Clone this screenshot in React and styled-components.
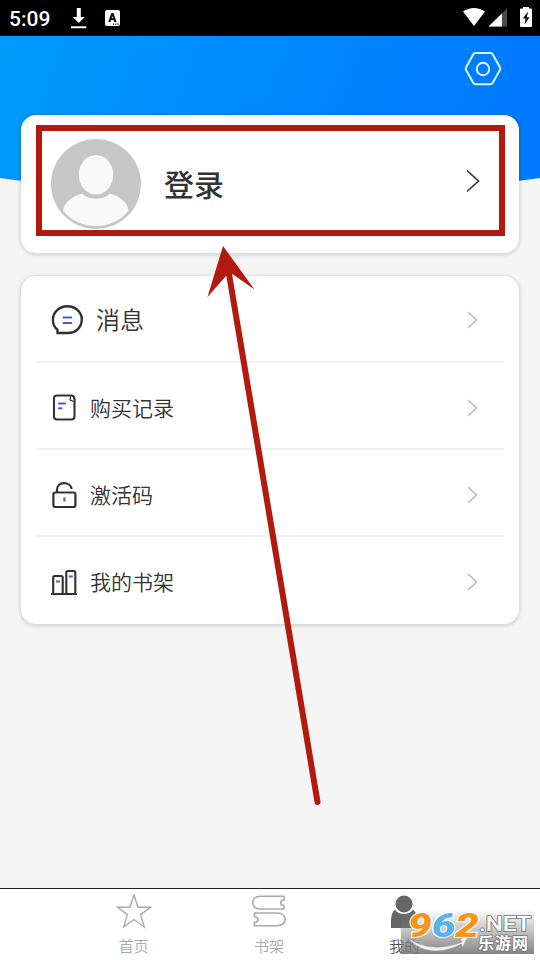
import styled, { createGlobalStyle } from "styled-components";

const GlobalStyle = createGlobalStyle`
  * {
    box-sizing: border-box;
  }
  body {
    margin: 0;
    background: #f5f5f5;
    font-family: Roboto, "Noto Sans CJK SC", sans-serif;
  }
  svg {
    display: block;
  }
`;

const RED = "#b11a0c";

const StatusIcons = () => (
  <svg width="72" height="36" viewBox="0 0 72 36">
    <path d="M1 11.500C7.500 6.800 16.500 6.800 23 11.500L12 26z" fill="#fff" />
    <path d="M26.500 26.500L45 8.500V26.500z" fill="#4a4a4a" />
    <path d="M26.500 26.500L40 13.400V26.500z" fill="#fff" />
    <path d="M59 8.500h2V7h6v1.500h2a1 1 0 0 1 1 1V26a1 1 0 0 1-1 1h-10a1 1 0 0 1-1-1V9.500a1 1 0 0 1 1-1z" fill="#fff" />
    <path d="M66 11.500l-5 7h2.600l-1 6 4.900-7.300h-2.600z" fill="#000" />
  </svg>
);

const DownloadIcon = () => (
  <svg width="16" height="22" viewBox="0 0 16 22" fill="#fff">
    <path d="M5.800 1h4v9h4L7.800 16 1.800 10h4zM0 19.300h15.300V21.300H0z" />
  </svg>
);

const BadgeIcon = () => (
  <svg width="15" height="16" viewBox="0 0 15 16">
    <rect width="15" height="16" rx="2" fill="#fff" />
    <text x="7.300" y="12" fontFamily="Roboto" fontSize="12" fontWeight="900" textAnchor="middle">
      A
    </text>
    <path d="M8 14.200h6" stroke="#000" strokeWidth="1.200" strokeDasharray="1.200 1" />
  </svg>
);

const SettingsIcon = () => (
  <svg width="38" height="36" viewBox="0 0 38 36" fill="none" stroke="#dcf8ff" strokeWidth="2">
    <path d="M11.500 2h15q1.500 0 2.300 1.400l7 12.600q.9 1.600 0 3.200l-7 12.500q-.8 1.500-2.300 1.500h-15q-1.500 0-2.300-1.500l-7-12.500q-.9-1.600 0-3.200l7-12.600Q10 2 11.500 2z" />
    <circle cx="19" cy="18" r="6.200" />
  </svg>
);

const AvatarIcon = () => (
  <svg width="90" height="90" viewBox="0 0 90 90">
    <circle cx="45" cy="45" r="45" fill="#c6c6c6" />
    <ellipse cx="45" cy="35.700" rx="17.200" ry="19.800" fill="#f9f9f9" />
    <path d="M12 71.500C13 63 21 57.500 31 54.500C39 61.500 51 61.500 59 54.500C69 57.500 76.500 63 77.500 71.500C70 81.500 58 87 45 87S19.500 81.500 12 71.500z" fill="#f9f9f9" />
  </svg>
);

const MessageIcon = () => (
  <svg width="32" height="32" viewBox="0 0 32 32" fill="none" strokeWidth="2.400">
    <path d="M6.500 29V25.800C3.500 23.500 1.900 19.800 1.900 15.800C1.900 8 8.500 2.300 16.300 2.300C24.500 2.300 30.800 8.200 30.800 15.500C30.800 23 25 29 17 29z" stroke="#2f3033" />
    <path d="M12.500 13.400h7.800M12.500 19h7.800" stroke="#4460c4" strokeWidth="2" strokeLinecap="round" />
  </svg>
);

const RecordIcon = () => (
  <svg width="26" height="30" viewBox="0 0 26 30" fill="none" stroke="#303236" strokeWidth="2.100">
    <path d="M6 2.500H20.500Q23.500 3 23.500 6V23.500q0 3-3 3H6q-3 0-3-3V5.500q0-3 3-3z" />
    <path d="M19.500 3.500l-.3 3.500L22.500 8.500" strokeWidth="1.300" />
    <path d="M8 10.500h6M8 15.200h2.500" stroke="#4460c4" strokeLinecap="round" />
  </svg>
);

const LockIcon = () => (
  <svg width="26" height="30" viewBox="0 0 26 30" fill="none" stroke="#303236" strokeWidth="2.200">
    <rect x="2.400" y="12.500" width="22" height="14.500" rx="2" />
    <path d="M6 12.500V9.500C6 1.300 19.500 1 20.700 9" />
    <path d="M13.400 17.500v4" stroke="#4460c4" />
  </svg>
);

const ShelfIcon = () => (
  <svg width="26" height="30" viewBox="0 0 26 30" fill="none" stroke="#303236" strokeWidth="2.100">
    <path d="M2.200 27V10.500q0-1.500 1.500-1.500h6.500q1.500 0 1.500 1.500V27M15.300 27V5.500q0-1.500 1.500-1.500h6q1.500 0 1.500 1.500V27M0 27h26" />
    <path d="M5 14.500h4M17.800 9.500h4" stroke="#4460c4" />
  </svg>
);

const Chevron = ({ dark }) => (
  <svg
    width={dark ? 16 : 13}
    height={dark ? 24 : 20}
    viewBox={dark ? "0 0 16 24" : "0 0 13 20"}
    fill="none"
    stroke={dark ? "#333" : "#b6b6b6"}
    strokeWidth={dark ? 1.6 : 1.4}
  >
    <path d={dark ? "M2 1.500L13.500 12L2 22.500" : "M2 2L10.500 10L2 18"} />
  </svg>
);

const StarIcon = () => (
  <svg width="36" height="36" viewBox="0 0 36 36" fill="none" stroke="#aaa" strokeWidth="1.400">
    <path d="M18 2L22.100 14.300H34.500L24.600 21.600L28.300 34L18 26.500L7.700 34L11.400 21.600L1.500 14.300H13.900z" />
  </svg>
);

const BooksIcon = () => (
  <svg width="36" height="36" viewBox="0 0 36 36" fill="none" stroke="#aaa" strokeWidth="1.600">
    <path d="M33 3.300H9C-.8 3.300-.8 16 9 16H33V12.500C28.500 12.500 28.500 7 33 7z" />
    <path d="M3.500 20H26C37 20 37 32.700 26 32.700H3.500V29.200C8 29.200 8 23.700 3.500 23.700z" />
  </svg>
);

const PersonIcon = () => (
  <svg width="36" height="36" viewBox="0 0 36 36" fill="#666">
    <circle cx="18" cy="11" r="8.500" />
    <path d="M9 16.500C12.500 22.500 23.500 22.500 27 16.500C30 19 31.500 23 31.500 28V35H5V28C5 23 6 19 9 16.500z" />
  </svg>
);

const SiteLogo = () => (
  <svg width="134" height="46" viewBox="0 0 134 46">
    <path d="M7 29C25 41 43 40 61 33L59 30L67 27L62 38L60 35C42 45 20 45 7 29z" fill="#f2f2f2" stroke="#999" strokeWidth=".5" />
    <g
      fontFamily="Roboto"
      fontWeight="900"
      fontStyle="italic"
      fontSize="33"
      stroke="#fff"
      strokeWidth="2"
      paintOrder="stroke"
      transform="translate(7 28)"
    >
      <text textLength="71" lengthAdjust="spacingAndGlyphs">
        <tspan fill="#f7941e">9</tspan>
        <tspan fill="#58b3e8">6</tspan>
        <tspan fill="#f7941e">2</tspan>
      </text>
    </g>
    <g fill="#fff" stroke="#777" strokeWidth="1.600" paintOrder="stroke">
      <text x="78" y="22" fontSize="20" fontWeight="500" fontFamily="Roboto" textLength="52" lengthAdjust="spacingAndGlyphs">
        .NET
      </text>
      <text x="77" y="40" fontSize="16" fontWeight="bold" fontFamily="Noto Sans CJK SC" textLength="50">
        乐游网
      </text>
    </g>
  </svg>
);

const ROWS = [
  { label: "消息", Icon: MessageIcon, large: true },
  { label: "购买记录", Icon: RecordIcon },
  { label: "激活码", Icon: LockIcon },
  { label: "我的书架", Icon: ShelfIcon },
];

const TABS = [
  { label: "首页", Icon: StarIcon },
  { label: "书架", Icon: BooksIcon },
  { label: "我的", Icon: PersonIcon, active: true },
];

const App = () => {
  return (
    <Screen>
      <GlobalStyle />
      <StatusBar>
        <Clock>5:09</Clock>
        <DownloadIcon />
        <BadgeIcon />
        <StatusRight>
          <StatusIcons />
        </StatusRight>
      </StatusBar>
      <Hero>
        <SettingsIcon />
      </Hero>
      <Content>
        <ProfileCard>
          <AvatarIcon />
          <LoginText>登录</LoginText>
          <ProfileArrow>
            <Chevron dark />
          </ProfileArrow>
          <Highlight />
        </ProfileCard>
        <MenuCard>
          {ROWS.map(({ label, Icon, large }) => (
            <Row key={label} $large={large}>
              <Icon />
              <RowLabel $large={large}>{label}</RowLabel>
              <Chevron />
            </Row>
          ))}
        </MenuCard>
      </Content>
      <TabBar>
        {TABS.map(({ label, Icon, active }) => (
          <Tab key={label} $active={active}>
            <Icon />
            {label}
          </Tab>
        ))}
      </TabBar>
      <Arrow width="540" height="960" viewBox="0 0 540 960">
        <path d="M228 268L317.500 802" stroke={RED} strokeWidth="6" strokeLinecap="round" />
        <path d="M223 246L254.500 289.500L229.500 272L207.500 297z" fill={RED} />
      </Arrow>
      <Watermark>
        <SiteLogo />
      </Watermark>
    </Screen>
  );
};

const Screen = styled.div`
  position: relative;
  display: flex;
  flex-direction: column;
  width: 540px;
  height: 960px;
  overflow: hidden;
  background: #f5f5f5;
`;

const StatusBar = styled.div`
  display: flex;
  flex: none;
  align-items: center;
  height: 36px;
  padding-left: 9px;
  background: #000;

  svg + svg {
    margin-left: 18px;
  }
`;

const Clock = styled.span`
  width: 62px;
  color: #fff;
  font-size: 21px;
  font-weight: 500;
  line-height: 36px;
  padding-top: 1px;
`;

const StatusRight = styled.div`
  margin-left: auto;
  margin-right: 6px;
`;

const Hero = styled.div`
  display: flex;
  flex: none;
  justify-content: flex-end;
  align-items: flex-start;
  height: 160px;
  padding: 15px 38px 0 0;
  background: linear-gradient(110deg, #009bfa 0%, #007aff 90%);
  clip-path: ellipse(586px 160px at 50% 0);
`;

const Content = styled.div`
  display: flex;
  flex-direction: column;
  gap: 23px;
  margin-top: -81px;
  padding: 0 21px;
`;

const Card = styled.div`
  border-radius: 15px;
  background: #fff;
  box-shadow: 0 1px 3px 2px rgba(0, 0, 0, 0.1);
`;

const ProfileCard = styled(Card)`
  position: relative;
  display: flex;
  align-items: center;
  height: 138px;
  padding: 0 38px 0 30px;
`;

const LoginText = styled.span`
  flex: 1;
  margin-left: 23px;
  padding-bottom: 3px;
  color: #333;
  font-size: 30px;
  font-weight: 500;
`;

const ProfileArrow = styled.div`
  padding-bottom: 6px;
`;

const Highlight = styled.div`
  position: absolute;
  top: 10px;
  left: 15px;
  width: 469px;
  height: 111px;
  border: 6px solid ${RED};
`;

const MenuCard = styled(Card)`
  height: 348px;
  padding: 0 15px;
`;

const Row = styled.div`
  display: flex;
  align-items: center;
  height: 87px;
  padding: ${(p) => (p.$large ? "3px 25px 0 15px" : "5px 25px 0 15px")};
  border-bottom: 2px solid #f0f0f0;

  &:last-child {
    padding-top: 3px;
    border-bottom: none;
  }
`;

const RowLabel = styled.span`
  flex: 1;
  margin-left: 13px;
  padding-bottom: ${(p) => (p.$large ? 3 : 2)}px;
  color: #333;
  font-size: ${(p) => (p.$large ? 24 : 21)}px;
  font-weight: 350;
`;

const TabBar = styled.div`
  display: flex;
  height: 72px;
  margin-top: auto;
  padding: 4px 68px 0 66px;
  border-top: 1px solid #222;
  background: #fff;
`;

const Tab = styled.div`
  display: flex;
  flex: 1;
  flex-direction: column;
  align-items: center;
  color: ${(p) => (p.$active ? "#555" : "#aaa")};
  font-size: 15px;
  font-weight: 350;
  line-height: 36px;

  svg {
    flex: none;
  }
`;

const Arrow = styled.svg`
  position: absolute;
  top: 0;
  left: 0;
  pointer-events: none;
`;

const Watermark = styled.div`
  position: absolute;
  left: 401px;
  top: 909px;
  width: 133px;
  height: 45px;
  background: linear-gradient(rgba(120, 120, 120, 0), rgba(120, 120, 120, 0.9));
`;

export default App;
